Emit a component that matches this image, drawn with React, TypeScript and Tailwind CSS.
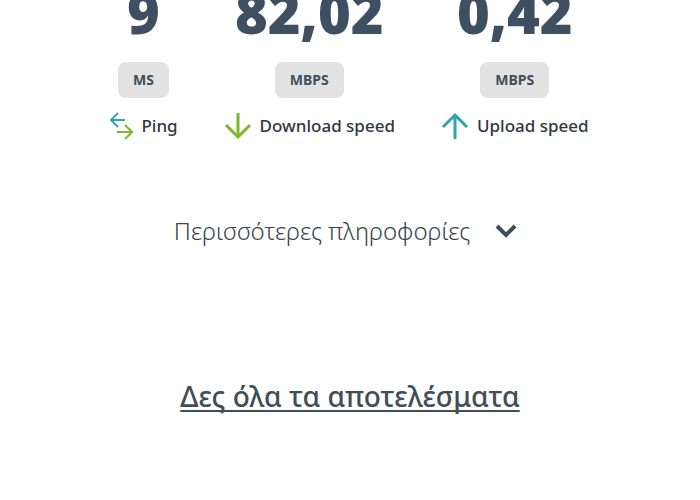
import React from 'react';

interface Metric {
  value: string;
  unit: string;
  label: string;
  icon: React.ReactNode;
}

const PingIcon: React.FC = () => (
  <svg className="w-6 h-7 shrink-0" viewBox="0 0 24 28" fill="none" strokeWidth="2" aria-hidden="true">
    <path d="M16 8H2M9 1L2 8l7 7" stroke="#36a3b0" />
    <path d="M8 20h15M16 13l7 7-7 7" stroke="#7cb82c" />
  </svg>
);

const DownIcon: React.FC = () => (
  <svg className="w-7 h-7 shrink-0" viewBox="0 0 28 28" fill="none" stroke="#7cb82c" strokeWidth="3" aria-hidden="true">
    <path d="M14 1v24M2 13l12 12 12-12" />
  </svg>
);

const UpIcon: React.FC = () => (
  <svg className="w-7 h-7 shrink-0" viewBox="0 0 28 28" fill="none" stroke="#30a3ad" strokeWidth="3" aria-hidden="true">
    <path d="M14 27V3M2 15L14 3l12 12" />
  </svg>
);

const metrics: Metric[] = [
  { value: '9', unit: 'MS', label: 'Ping', icon: <PingIcon /> },
  { value: '82,02', unit: 'MBPS', label: 'Download speed', icon: <DownIcon /> },
  { value: '0,42', unit: 'MBPS', label: 'Upload speed', icon: <UpIcon /> },
];

const App: React.FC = () => {
  return (
    <main className="min-h-screen overflow-hidden bg-white font-['Noto_Sans',sans-serif] text-[#3d4f60]">
      {/* Results */}
      <section className="-mt-4 flex justify-center gap-[46px] pr-0.5">
        {metrics.map((metric) => (
          <div key={metric.label} className="flex flex-col items-center">
            <span className="text-[56px] leading-[56px] font-black whitespace-nowrap">{metric.value}</span>
            <span className="mt-[22px] flex h-9 items-center rounded-lg bg-[#e2e2e2] px-[15px] text-sm font-bold">
              {metric.unit}
            </span>
            <div className="mt-[14px] flex items-center gap-2">
              {metric.icon}
              <span className="text-[17px] leading-7 font-medium whitespace-nowrap text-[#30383f]">{metric.label}</span>
            </div>
          </div>
        ))}
      </section>

      {/* More details */}
      <div className="mt-[73px] flex justify-center pr-2">
        <button type="button" className="flex items-center gap-6 text-2xl leading-9 font-light whitespace-nowrap text-[#3a434b]">
          Περισσότερες πληροφορίες
          <svg className="w-6 h-4" viewBox="0 0 24 16" fill="none" stroke="#3d4b5a" strokeWidth="4" aria-hidden="true">
            <path d="M3 3l9 9 9-9" />
          </svg>
        </button>
      </div>

      <div className="mt-[131px] flex justify-center">
        <a
          href="#results"
          className="text-[28px] leading-8 font-medium whitespace-nowrap text-[#414d57] underline decoration-2 underline-offset-[3px] [text-decoration-skip-ink:none]"
        >
          Δες όλα τα αποτελέσματα
        </a>
      </div>
    </main>
  );
};

export default App;
